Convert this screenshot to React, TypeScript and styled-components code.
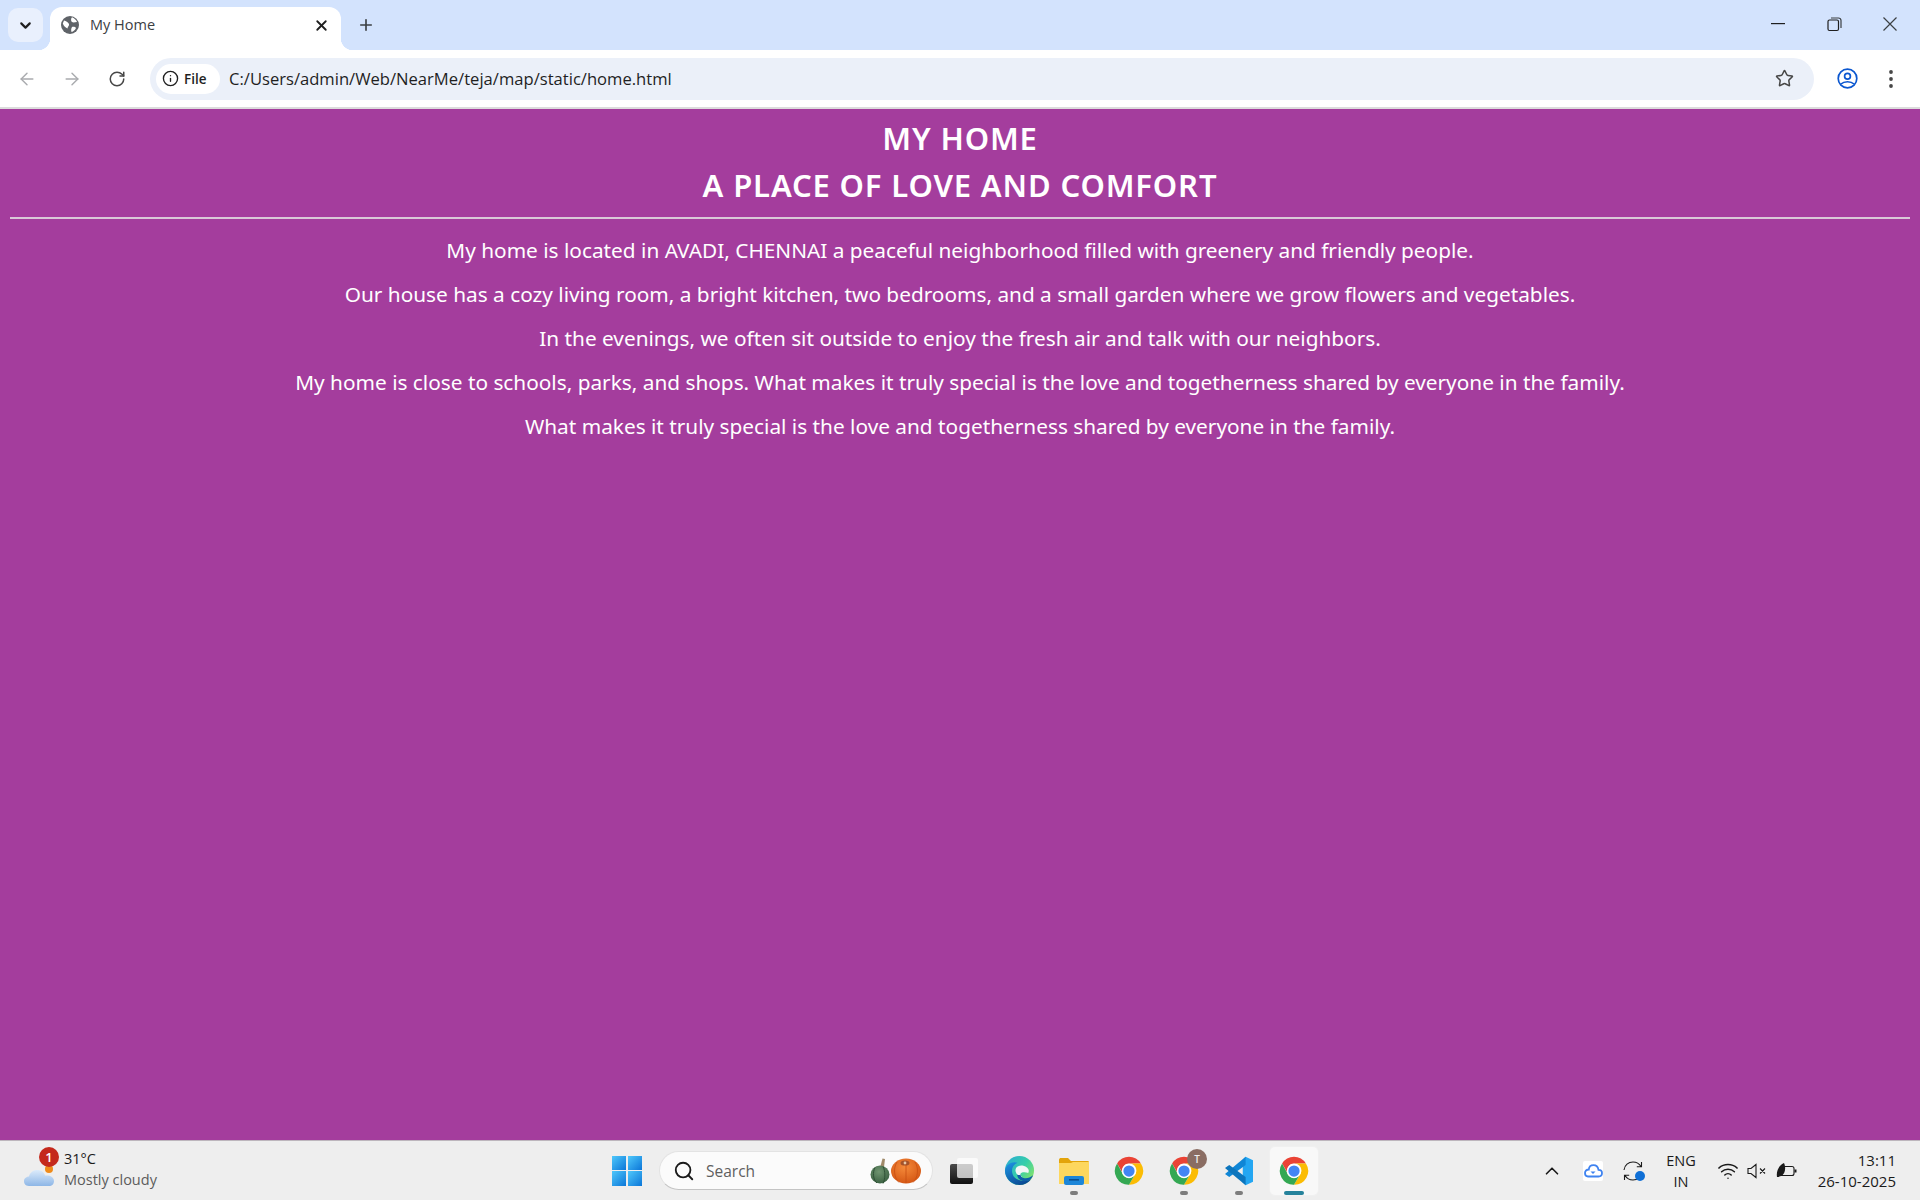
import React from "react";
import styled, { createGlobalStyle } from "styled-components";
import { ArrowLeft, ArrowRight, RotateCw, Info, Star, X, Plus, ChevronDown, ChevronUp, Search, Wifi } from "lucide-react";

const Global = createGlobalStyle`
  html, body { margin: 0; padding: 0; height: 100%; overflow: hidden; }
  #root { height: 100%; }
`;
const UI = `"Open Sans", "Noto Sans", sans-serif`;

const Screen = styled.div`
  width: 1920px; height: 1200px; display: flex; flex-direction: column; overflow: hidden;
  font-family: ${UI};
`;
const TabStrip = styled.div`
  height: 50px; flex: none; background: #d3e3fd; display: flex; align-items: flex-start; padding-left: 8px;
`;
const TabGroupBtn = styled.div`
  width: 35px; height: 34px; margin-top: 8px; border-radius: 10px; background: #e9f0fd; display: flex; align-items: center; justify-content: center; color: #1f1f1f;
`;
const Tab = styled.div`
  position: relative; width: 291px; height: 43px; margin: 7px 0 0 7px; background: #fff; border-radius: 12px 12px 0 0;
  display: flex; align-items: center; padding: 0 11px 7px; box-sizing: border-box; color: #3c4043;
  &::before, &::after { content: ""; position: absolute; bottom: 0; width: 12px; height: 12px; }
  &::before { left: -12px; background: radial-gradient(circle at 0 0, transparent 12px, #fff 12.5px); }
  &::after { right: -12px; background: radial-gradient(circle at 100% 0, transparent 12px, #fff 12.5px); }
`;
const TabTitle = styled.span`
  font-size: 14.5px; margin-left: 11px; flex: 1; color: #3c4043; padding-bottom: 1px;
`;
const NewTab = styled.div`
  margin: 15px 0 0 11px; width: 28px; height: 20px; display: flex; align-items: center; justify-content: center; color: #3c4043;
`;
const WindowControls = styled.div`
  margin-left: auto; display: flex; align-items: center; height: 48px; color: #3c4043;
`;
const WinBtn = styled.div<{ $mr?: number }>`
  width: 56px; height: 48px; display: flex; align-items: center; justify-content: center; margin-right: ${(p) => p.$mr ?? 0}px;
`;
const Toolbar = styled.div`
  height: 57px; flex: none; background: #fff; border-radius: 12px 12px 0 0; display: flex; align-items: center; box-sizing: border-box; padding-left: 4px;
`;
const NavBtn = styled.div<{ $faded?: boolean; $w?: number }>`
  width: ${(p) => p.$w ?? 45}px; height: 36px; display: flex; align-items: center; justify-content: center; color: ${(p) => (p.$faded ? "#a9abae" : "#474747")};
`;
const Omnibox = styled.div`
  width: 1664px; height: 42px; margin-left: 11px; border-radius: 21px; background: #ebf0f9; display: flex; align-items: center; padding: 0 20px 0 6px; box-sizing: border-box;
`;
const Chip = styled.div`
  height: 30px; width: 64px; flex: none; background: #fff; border-radius: 15px; display: flex; align-items: center; padding-left: 6px; box-sizing: border-box; color: #1f1f1f; gap: 5px;
  font-size: 13.5px; font-weight: 600;
`;
const Url = styled.div`
  font-size: 16.6px; color: #1f1f1f; margin-left: 9px; flex: 1;
`;
const ToolbarEnd = styled.div`
  display: flex; align-items: center; flex: 1;
`;
const Divider = styled.div`
  height: 2px; flex: none; background: #dcdcdc;
`;
const Page = styled.main`
  flex: 1; background: #a43d9d; color: #fff; font-family: "Noto Sans", "Open Sans", sans-serif; text-align: center; padding: 0 10px; min-height: 0;
`;
const Titles = styled.div`
  padding-top: 6px;
`;
const Heading = styled.h1`
  margin: 0; font-size: 31px; line-height: 47px; font-weight: 600; letter-spacing: 0.85px;
`;
const Rule = styled.hr`
  margin: 8px 0 0; border: 0; height: 2px; background: #d9c9d8;
`;
const Body = styled.div`
  padding-top: 9px;
`;
const Para = styled.p`
  margin: 0; font-size: 20.8px; line-height: 44px;
`;
const Taskbar = styled.footer`
  height: 60px; flex: none; background: #eeeeee; border-top: 1px solid #bdb6bd; box-sizing: border-box; display: flex; align-items: center;
`;
const Weather = styled.div`
  width: 612px; flex: none; display: flex; align-items: center; padding-left: 24px; box-sizing: border-box;
`;
const WeatherIcon = styled.div`
  position: relative; width: 32px; height: 30px; display: flex; align-items: flex-end; margin-top: 2px;
`;
const Badge = styled.span`
  position: absolute; left: 15px; top: -10px; width: 20px; height: 20px; border-radius: 50%; background: #c4291c; color: #fff; font-size: 13px; font-weight: 600; display: flex; align-items: center; justify-content: center;
`;
const WeatherText = styled.div`
  margin-left: 8px; display: flex; flex-direction: column; font-size: 14.5px; line-height: 20.5px; color: #1a1a1a; margin-top: -2px;
`;
const Muted = styled.span`
  color: #5c5c5c;
`;
const Center = styled.div`
  display: flex; align-items: center;
`;
const StartBtn = styled.div`
  width: 30px; height: 30px; display: grid; grid-template: 1fr 1fr / 1fr 1fr; gap: 1.5px; flex: none;
`;
const Pane = styled.span`
  background: linear-gradient(135deg, #4fc8fb, #0b76d8);
`;
const SearchBox = styled.div`
  width: 274px; height: 39px; margin-left: 17px; background: #fbfbfb; border: 1px solid #e3e3e3; border-bottom-color: #c4c4c4; border-radius: 20px; box-sizing: border-box; display: flex; align-items: center; padding: 0 10px 0 13px; color: #1a1a1a;
`;
const SearchLabel = styled.span`
  flex: 1; font-size: 15.5px; color: #5f5f5f; margin-left: 11px;
`;
const TaskIcon = styled.div<{ $active?: boolean; $pip?: boolean; $ml?: number }>`
  position: relative; width: 48px; height: 48px; margin-left: ${(p) => p.$ml ?? 7}px; flex: none; border-radius: 5px; display: flex; align-items: center; justify-content: center;
  background: ${(p) => (p.$active ? "#f8f8f8" : "transparent")};
  box-shadow: ${(p) => (p.$active ? "0 0 0 1px #f0f0f0" : "none")};
  &::after {
    content: ""; display: ${(p) => (p.$active || p.$pip ? "block" : "none")}; position: absolute; bottom: 0; left: 50%; transform: translateX(-50%);
    height: 4px; border-radius: 2px; width: ${(p) => (p.$active ? 20 : 8)}px; background: ${(p) => (p.$active ? "#25829b" : "#7d7d7d")};
  }
`;
const UserBubble = styled.span`
  position: absolute; right: 1px; top: 2px; width: 20px; height: 20px; border-radius: 50%; background: #8a6d63; color: #eee; font-size: 10px; font-weight: 600; display: flex; align-items: center; justify-content: center;
`;
const Tray = styled.div`
  margin-left: auto; display: flex; align-items: center; padding-right: 24px; color: #1a1a1a;
`;
const TrayIcon = styled.div<{ $ml?: number }>`
  display: flex; align-items: center; justify-content: center; margin-left: ${(p) => p.$ml ?? 0}px; position: relative;
`;
const CloudChip = styled.div`
  width: 20px; height: 20px; background: #fff; border-radius: 2px; display: flex; align-items: center; justify-content: center; margin-left: 20px;
`;
const Lang = styled.div`
  margin-left: 23px; font-size: 14.5px; line-height: 21px; text-align: center; width: 30px; color: #1a1a1a;
`;
const Clock = styled.div`
  margin-left: 19px; font-size: 15px; line-height: 21px; text-align: right; color: #1a1a1a; width: 80px;
`;
const SyncDot = styled.span`
  position: absolute; right: -2px; bottom: 0; width: 10px; height: 10px; border-radius: 50%; background: #0f6fd6;
`;

const Globe = () => (
  <svg width="18" height="18" viewBox="0 0 18 18"><circle cx="9" cy="9" r="9" fill="#5f6368" />
    <path d="M3 4.5 C5 5 7 6 8 8 C8.5 10 6.5 10.5 6.5 12.5 C5 12 2.5 10 1.8 7.5Z M11 1.2 C13 2 15.5 4 16 6 C14 6 12.5 7 11 6 C10 5 9.5 3 11 1.2Z M11 11 C12.5 10.5 14.5 11 15 12 C14 14 12.5 15.5 10.5 16 C10 14.5 10 12.5 11 11Z" fill="#fff" /></svg>
);
const Restore = () => (
  <svg width="15" height="15" viewBox="0 0 15 15" fill="none" stroke="#3c4043" strokeWidth="1.2"><rect x="1" y="3" width="10.5" height="10.5" rx="1.5" stroke="#1f1f1f" /><path d="M4 1 H11.5 A2.5 2.5 0 0 1 14 3.5 V11" /></svg>
);
const Minimize = () => <svg width="14" height="2" viewBox="0 0 14 2"><rect width="14" height="1.2" fill="#1f1f1f" /></svg>;
const CloseGlyph = () => <svg width="14" height="14" viewBox="0 0 14 14" stroke="#3c4043" strokeWidth="1.2"><path d="M.5 .5 L13.5 13.5 M13.5 .5 L.5 13.5" /></svg>;
const Profile = () => (
  <svg width="21" height="21" viewBox="0 0 21 21" fill="none" stroke="#0b57d0" strokeWidth="1.7"><circle cx="10.5" cy="10.5" r="9.3" /><circle cx="10.5" cy="8.2" r="2.9" /><path d="M4 16 C7 13 14 13 17 16" /></svg>
);
const Dots = () => (
  <svg width="6" height="18" viewBox="0 0 6 18" fill="#474747"><circle cx="3" cy="2" r="1.9" /><circle cx="3" cy="9" r="1.9" /><circle cx="3" cy="16" r="1.9" /></svg>
);
const CloudSun = () => (
  <svg width="31" height="24" viewBox="0 0 31 24"><defs><linearGradient id="cl" x1="0" y1="0" x2="0" y2="1"><stop offset="0" stopColor="#dcebfb" /><stop offset="1" stopColor="#8db6e6" /></linearGradient></defs>
    <circle cx="25" cy="6" r="4" fill="#ef8b1a" />
    <path d="M5 23 C1 23 0 20 0 18 C0 15 3 13.5 5 13.5 C6 9 10 6.5 14 7 C18 7.5 20.5 10 21 12.5 C26 12 30 14 30 18 C30 21 28 23 25 23Z" fill="url(#cl)" /></svg>
);
const Gourds = () => (
  <svg width="52" height="26" viewBox="0 0 52 26">
    <defs>
      <radialGradient id="pk" cx=".45" cy=".35" r=".75"><stop offset="0" stopColor="#f58a3a" /><stop offset="1" stopColor="#d0500f" /></radialGradient>
      <radialGradient id="gr" cx=".45" cy=".35" r=".75"><stop offset="0" stopColor="#6f9470" /><stop offset="1" stopColor="#345a3c" /></radialGradient>
    </defs>
    <path d="M10.5 8 L12.5 .5 L15 1 L14 9Z" fill="#a08a6a" />
    <ellipse cx="10" cy="16.5" rx="9.5" ry="9" fill="url(#gr)" /><path d="M5 9.5 C2.5 14 3 22 7 25 M13 8.5 C15.5 13 15.5 21 13 25.5" stroke="#2f5036" fill="none" />
    <ellipse cx="36" cy="13" rx="15" ry="12.5" fill="url(#pk)" />
    <path d="M27 4 C23 10 24 20 29 24.5 M45 4 C49 10 48 20 43 24.5 M36 6 V25" stroke="#c84e12" strokeWidth=".8" fill="none" />
    <ellipse cx="35" cy="5" rx="4.5" ry="2.6" fill="#a4522a" /><circle cx="35" cy="5" r="1.4" fill="#e8c8a8" />
  </svg>
);
const TaskView = () => (
  <svg width="30" height="28" viewBox="0 0 30 28">
    <defs><linearGradient id="tv" x1="0" y1="0" x2="0" y2="1"><stop offset="0" stopColor="#4a4a4a" /><stop offset="1" stopColor="#101010" /></linearGradient></defs>
    <rect x="1" y="7" width="23" height="20" rx="2" fill="url(#tv)" />
    <rect x="8" y="1" width="21" height="20" rx="2" fill="#ffffff" fillOpacity=".72" />
  </svg>
);
const Edge = () => (
  <svg width="31" height="31" viewBox="0 0 32 32">
    <defs>
      <linearGradient id="e1" x1="0" y1="0" x2="1" y2=".7"><stop offset="0" stopColor="#2aa9d8" /><stop offset=".6" stopColor="#36cfa8" /><stop offset="1" stopColor="#86e36a" /></linearGradient>
      <linearGradient id="e2" x1="0" y1="0" x2=".6" y2="1"><stop offset="0" stopColor="#1f97e6" /><stop offset="1" stopColor="#0a4a94" /></linearGradient>
    </defs>
    <circle cx="16" cy="16" r="15" fill="url(#e1)" />
    <path d="M1 16 C2 9 9 6 14 8 C9 10 7 15 9 20 C11 26 21 29 28 25 C25 29 21 31 16 31 C8 31 1 24 1 16Z" fill="url(#e2)" />
    <path d="M12 17 C11 12 16 10 20 11 C24 12 27 15 25 18.5 C22 17.5 17 17.5 17 20 C17 21 18 22 19 23 C15 23 13 20 12 17Z" fill="#f2f6f6" />
    <path d="M17 20 C17 24 24 26 30 21 C29 24 27 26 25 26.5 C20 28 14 26 13.5 20 C15 21 16 21 17 20Z" fill="#0f5ea8" />
  </svg>
);
const Folder = () => (
  <svg width="32" height="28" viewBox="0 0 32 28"><path d="M1 3 C1 1.5 2 1 3 1 H10 L13 4 H30 C31 4 31 5 31 6 V10 H1Z" fill="#e3a40b" /><path d="M1 6 H13 L15 5 H31 V27 H1Z" fill="#fdd75e" /><rect x="6" y="19" width="20" height="9" rx="2" fill="#1d86d8" /><rect x="11" y="22" width="10" height="1.6" fill="#0a4f8f" /></svg>
);
const Chrome = () => (
  <svg width="30" height="30" viewBox="0 0 48 48">
    <path d="M4.95 13 A22 22 0 0 1 43.05 13 L24 13 A11 11 0 0 0 14.47 29.5 Z" fill="#ea4335" transform="translate(0 -1)" />
    <path d="M43.05 12 A22 22 0 0 1 24 46 L33.53 29.5 A11 11 0 0 0 24 12 Z" fill="#fbbc04" />
    <path d="M24 46 A22 22 0 0 1 4.95 12 L14.47 29.5 A11 11 0 0 0 33.53 29.5 Z" fill="#34a853" />
    <circle cx="24" cy="24" r="11.5" fill="#fff" /><circle cx="24" cy="24" r="9" fill="#4285f4" />
  </svg>
);
const VSCode = () => (
  <svg width="30" height="30" viewBox="0 0 24 24">
    <path d="M17.3 .6 L23.2 3.4 V20.6 L17.3 23.4 L15 21 V3 Z" fill="#23a6f2" />
    <path d="M17.3 .6 V7.2 L4.2 16.8 L.8 14.4 Z" fill="#0f86d6" />
    <path d="M.8 9.6 L4.2 7.2 L17.3 16.8 V23.4 Z" fill="#0c75bd" />
  </svg>
);
const TrayCloud = () => (
  <svg width="19" height="14" viewBox="0 0 19 14" fill="none" stroke="#3f83f0" strokeWidth="1.8"><path d="M4 12.5 H14.5 C16.5 12.5 18 11 18 9 C18 7 16.5 5.8 14.5 5.8 C14 3 12 1.2 9.5 1.2 C7 1.2 5 3 4.8 5.5 C2.5 5.5 1 7 1 9 C1 11 2.3 12.5 4 12.5Z" /><path d="M9 10 L6.5 7.5 H11.5Z" fill="#3f83f0" stroke="none" /></svg>
);
const Sync = () => (
  <svg width="20" height="20" viewBox="0 0 20 20" fill="none" stroke="#1a1a1a" strokeWidth="1.1"><path d="M1 9 C1.5 4 5.5 1 10 1 C13.5 1 16.5 3 18 5.5 M18.5 1 V5.8 H13.8 M19 11 C18.5 16 14.5 19 10 19 C6.5 19 3.5 17 2 14.5 M1.5 19 V14.2 H6.2" /></svg>
);
const Speaker = () => (
  <svg width="20" height="16" viewBox="0 0 20 16" fill="none" stroke="#1a1a1a" strokeWidth="1.1"><path d="M1 5.5 H4 L9 1.5 V14.5 L4 10.5 H1Z M13 5.5 L18 10.5 M18 5.5 L13 10.5" /></svg>
);
const Battery = () => (
  <svg width="21" height="18" viewBox="0 0 21 18"><rect x="4" y="4.5" width="14" height="9" rx="2" fill="none" stroke="#1a1a1a" strokeWidth="1.1" /><rect x="18.5" y="7.5" width="2" height="3" fill="#1a1a1a" /><path d="M1 15 C0 9 3 3 8 1 C10 5 9.5 12 5 14 C3.5 14.6 2.5 15 1 15Z" fill="#1a1a1a" /></svg>
);

export default function App() {
  return (
    <Screen>
      <Global />
      <TabStrip>
        <TabGroupBtn><ChevronDown size={17} strokeWidth={3} /></TabGroupBtn>
        <Tab>
          <Globe />
          <TabTitle>My Home</TabTitle>
          <X size={17} strokeWidth={2.6} color="#1f1f1f" />
        </Tab>
        <NewTab><Plus size={18} strokeWidth={2.2} /></NewTab>
        <WindowControls>
          <WinBtn><Minimize /></WinBtn>
          <WinBtn><Restore /></WinBtn>
          <WinBtn $mr={2}><CloseGlyph /></WinBtn>
        </WindowControls>
      </TabStrip>
      <Toolbar>
        <NavBtn $faded><ArrowLeft size={20} strokeWidth={1.7} /></NavBtn>
        <NavBtn $faded><ArrowRight size={20} strokeWidth={1.7} /></NavBtn>
        <NavBtn><RotateCw size={18} strokeWidth={2} /></NavBtn>
        <Omnibox>
          <Chip><Info size={17} strokeWidth={1.9} /> File</Chip>
          <Url>C:/Users/admin/Web/NearMe/teja/map/static/home.html</Url>
          <Star size={19} strokeWidth={1.9} color="#474747" />
        </Omnibox>
        <ToolbarEnd>
          <NavBtn $w={66}><Profile /></NavBtn>
          <NavBtn $w={22}><Dots /></NavBtn>
        </ToolbarEnd>
      </Toolbar>
      <Divider />
      <Page>
        <Titles>
          <Heading>MY HOME</Heading>
          <Heading>A PLACE OF LOVE AND COMFORT</Heading>
        </Titles>
        <Rule />
        <Body>
          <Para>My home is located in AVADI, CHENNAI a peaceful neighborhood filled with greenery and friendly people.</Para>
          <Para>Our house has a cozy living room, a bright kitchen, two bedrooms, and a small garden where we grow flowers and vegetables.</Para>
          <Para>In the evenings, we often sit outside to enjoy the fresh air and talk with our neighbors.</Para>
          <Para>My home is close to schools, parks, and shops. What makes it truly special is the love and togetherness shared by everyone in the family.</Para>
          <Para>What makes it truly special is the love and togetherness shared by everyone in the family.</Para>
        </Body>
      </Page>
      <Taskbar>
        <Weather>
          <WeatherIcon><CloudSun /><Badge>1</Badge></WeatherIcon>
          <WeatherText>
            <span>31°C</span>
            <Muted>Mostly cloudy</Muted>
          </WeatherText>
        </Weather>
        <Center>
          <StartBtn><Pane /><Pane /><Pane /><Pane /></StartBtn>
          <SearchBox>
            <Search size={22} strokeWidth={2} />
            <SearchLabel>Search</SearchLabel>
            <Gourds />
          </SearchBox>
          <TaskIcon $ml={7}><TaskView /></TaskIcon>
          <TaskIcon><Edge /></TaskIcon>
          <TaskIcon $pip><Folder /></TaskIcon>
          <TaskIcon><Chrome /></TaskIcon>
          <TaskIcon $pip><Chrome /><UserBubble>T</UserBubble></TaskIcon>
          <TaskIcon $pip><VSCode /></TaskIcon>
          <TaskIcon $active><Chrome /></TaskIcon>
        </Center>
        <Tray>
          <ChevronUp size={22} strokeWidth={1.8} />
          <CloudChip><TrayCloud /></CloudChip>
          <TrayIcon $ml={20}><Sync /><SyncDot /></TrayIcon>
          <Lang>ENG<br />IN</Lang>
          <TrayIcon $ml={21}><Wifi size={22} strokeWidth={1.6} /></TrayIcon>
          <TrayIcon $ml={8}><Speaker /></TrayIcon>
          <TrayIcon $ml={9}><Battery /></TrayIcon>
          <Clock>13:11<br />26-10-2025</Clock>
        </Tray>
      </Taskbar>
    </Screen>
  );
}
